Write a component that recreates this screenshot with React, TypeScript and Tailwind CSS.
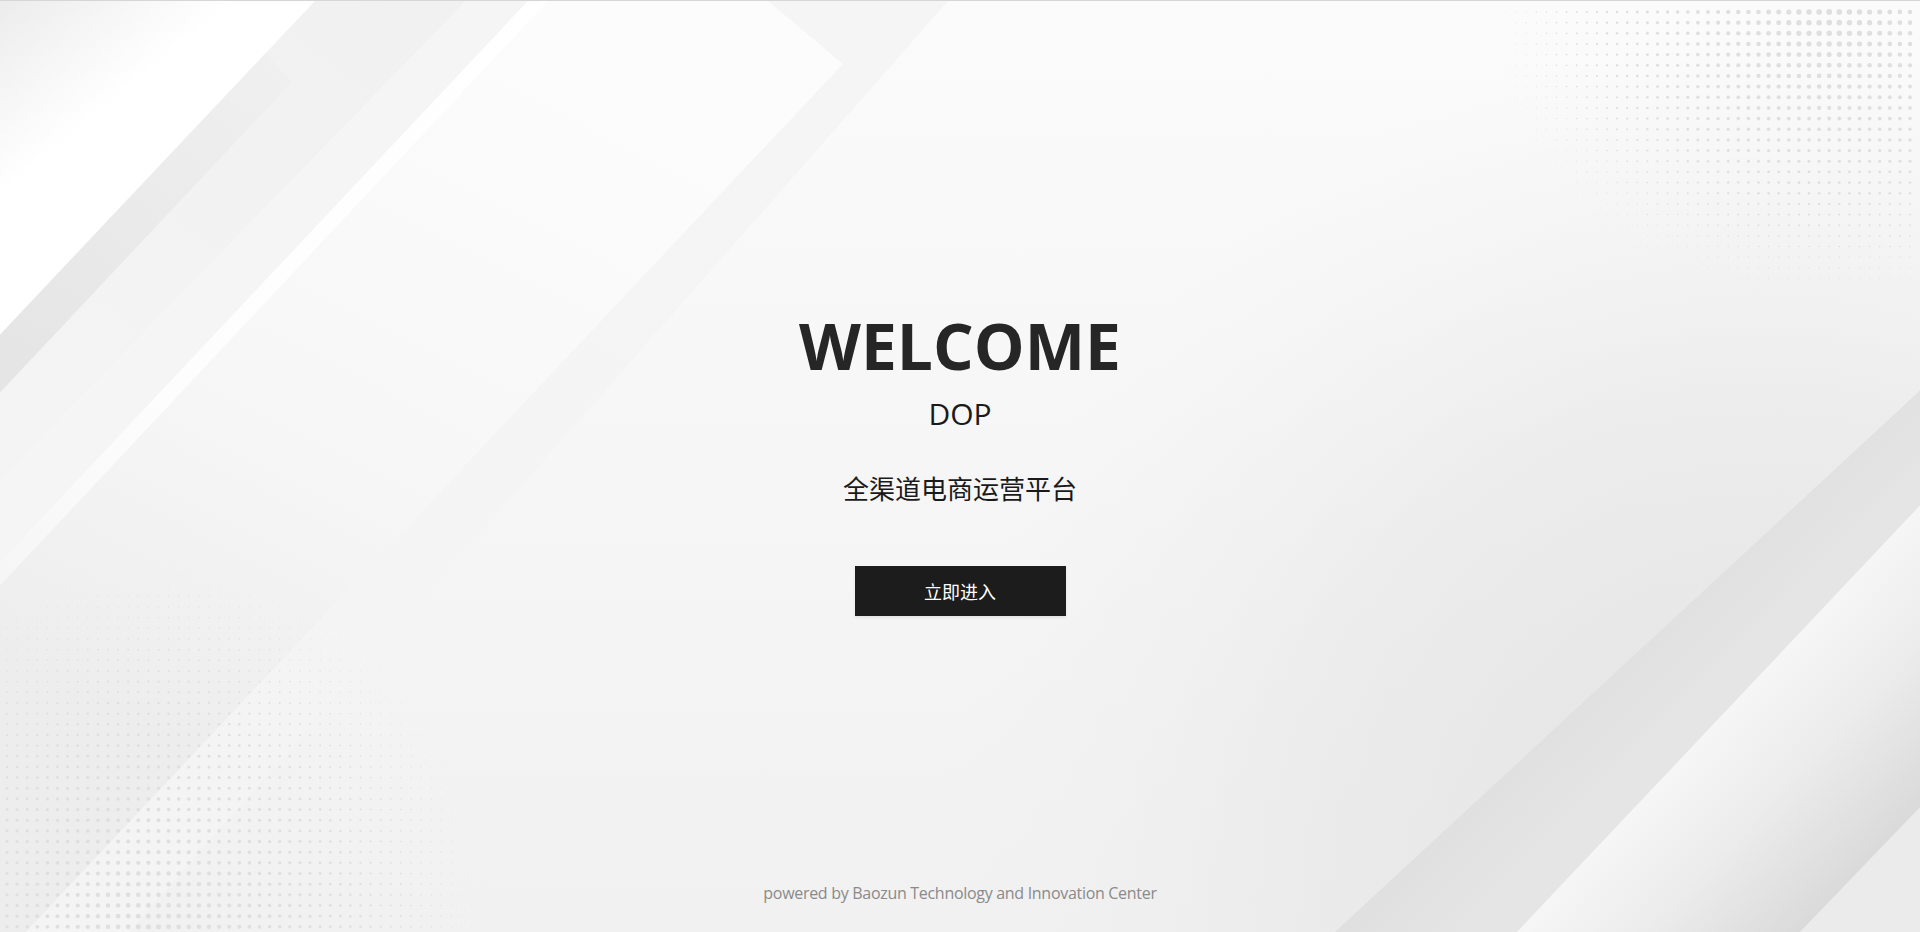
import React from "react";

type Dot = { x: number; y: number; r: number };

// halftone dots that fade out from a corner
function makeDots(
  x0: number,
  x1: number,
  y0: number,
  y1: number,
  cx: number,
  cy: number,
  rx: number,
  ry: number,
  rMax: number
): Dot[] {
  const out: Dot[] = [];
  for (let x = x0; x <= x1; x += 10.1) {
    for (let y = y0; y <= y1; y += 10.67) {
      const d = Math.sqrt(((x - cx) / rx) ** 2 + ((y - cy) / ry) ** 2);
      const r = rMax * (1 - d);
      if (r > 0.35) out.push({ x, y, r });
    }
  }
  return out;
}

const topRightDots = makeDots(1506, 1920, 11, 320, 1830, 10, 380, 330, 2.9);
const bottomLeftDots = makeDots(7, 520, 500, 932, 150, 935, 390, 430, 2.6);

function Background() {
  return (
    <svg
      className="absolute inset-0 h-full w-full"
      viewBox="0 0 1920 932"
      preserveAspectRatio="none"
    >
      <defs>
        <linearGradient id="base" x1="0" y1="0" x2="0" y2="932" gradientUnits="userSpaceOnUse">
          <stop offset="0" stopColor="#fbfbfb" />
          <stop offset="1" stopColor="#f1f1f1" />
        </linearGradient>
        <radialGradient id="shadeBR" cx="1760" cy="860" r="820" gradientUnits="userSpaceOnUse">
          <stop offset="0" stopColor="#e2e2e2" stopOpacity="1" />
          <stop offset="0.55" stopColor="#e8e8e8" stopOpacity="0.7" />
          <stop offset="1" stopColor="#f0f0f0" stopOpacity="0" />
        </radialGradient>
        <linearGradient id="corner" x1="0" y1="0" x2="95" y2="115" gradientUnits="userSpaceOnUse">
          <stop offset="0" stopColor="#ececec" />
          <stop offset="1" stopColor="#ffffff" />
        </linearGradient>
        <linearGradient id="darkBand" x1="40" y1="380" x2="280" y2="60" gradientUnits="userSpaceOnUse">
          <stop offset="0" stopColor="#e5e5e5" />
          <stop offset="1" stopColor="#f0f0f0" />
        </linearGradient>
        <linearGradient id="band1" x1="380" y1="0" x2="60" y2="420" gradientUnits="userSpaceOnUse">
          <stop offset="0" stopColor="#f1f1f1" />
          <stop offset="1" stopColor="#f4f4f4" />
        </linearGradient>
        <linearGradient id="stripe" x1="540" y1="0" x2="0" y2="575" gradientUnits="userSpaceOnUse">
          <stop offset="0" stopColor="#ffffff" />
          <stop offset="0.7" stopColor="#fdfdfd" />
          <stop offset="1" stopColor="#f6f6f6" />
        </linearGradient>
        <linearGradient id="mBand" x1="560" y1="60" x2="200" y2="760" gradientUnits="userSpaceOnUse">
          <stop offset="0" stopColor="#fcfcfc" />
          <stop offset="0.55" stopColor="#f7f7f7" />
          <stop offset="1" stopColor="#ededed" />
        </linearGradient>
        <linearGradient id="m2Band" x1="860" y1="0" x2="250" y2="800" gradientUnits="userSpaceOnUse">
          <stop offset="0" stopColor="#f5f5f5" />
          <stop offset="1" stopColor="#f4f4f4" />
        </linearGradient>
        <linearGradient id="rDark" x1="1560" y1="640" x2="1660" y2="740" gradientUnits="userSpaceOnUse">
          <stop offset="0" stopColor="#dddddd" />
          <stop offset="1" stopColor="#e5e5e5" />
        </linearGradient>
        <linearGradient id="rBright" x1="1718" y1="718" x2="1868" y2="860" gradientUnits="userSpaceOnUse">
          <stop offset="0" stopColor="#f6f6f6" />
          <stop offset="0.45" stopColor="#ececec" />
          <stop offset="1" stopColor="#dadada" />
        </linearGradient>
      </defs>

      <rect x="0" y="0" width="1920" height="932" fill="url(#base)" />
      <rect x="0" y="0" width="1920" height="932" fill="url(#shadeBR)" />

      {/* left top diagonal bands */}
      <polygon points="0,0 315,0 0,334" fill="url(#corner)" />
      <polygon points="315,0 466,0 0,480 0,334" fill="url(#band1)" />
      <polygon points="0,334 266,52 292,81 0,392" fill="url(#darkBand)" />
      <polygon points="466,0 528,0 0,562 0,480" fill="#f5f5f5" />
      <polygon points="548,0 768,0 843,63 26,932 0,932 0,585" fill="url(#mBand)" />
      <polygon points="768,0 948,0 129,932 26,932 843,63" fill="url(#m2Band)" />
      <polygon points="528,0 548,0 0,585 0,562" fill="url(#stripe)" />

      {/* right bottom diagonal bands */}
      <polygon points="1920,390 1335,932 1517,932 1920,505" fill="url(#rDark)" />
      <polygon points="1920,505 1517,932 1800,932 1920,807" fill="url(#rBright)" />
      <polygon points="1920,807 1800,932 1920,932" fill="#ebebeb" />

      <g fill="#dfdfdf">
        {topRightDots.map((d, i) => (
          <circle key={"a" + i} cx={d.x} cy={d.y} r={d.r} />
        ))}
        {bottomLeftDots.map((d, i) => (
          <circle key={"b" + i} cx={d.x} cy={d.y} r={d.r} />
        ))}
      </g>
    </svg>
  );
}

export default function App() {
  return (
    <div className="relative flex h-screen w-full flex-col overflow-hidden border-t border-[#d6d6d6] font-['Open_Sans',sans-serif]">
      <Background />

      <main className="relative flex flex-col items-center pt-[313px]">
        <h1 className="text-[64px] font-bold leading-[64px] text-[#262626]">WELCOME</h1>
        <p className="mt-[21px] text-[30px] leading-[30px] text-[#1a1a1a]">DOP</p>
        <p className="mt-[46px] font-['Noto_Sans_CJK_SC',sans-serif] text-[26px] leading-[26px] text-[#1a1a1a]">
          全渠道电商运营平台
        </p>
        <button className="mt-[65px] flex h-[50px] w-[211px] items-center justify-center bg-[#1c1c1c] font-['Noto_Sans_CJK_SC',sans-serif] text-[18px] text-white shadow-[0_2px_3px_rgba(0,0,0,0.07)]">
          立即进入
        </button>
      </main>

      <footer className="relative mt-auto pb-[31px] text-center text-[16px] leading-[16px] tracking-[-0.3px] text-[#8a8a8a]">
        powered by Baozun Technology and Innovation Center
      </footer>
    </div>
  );
}
